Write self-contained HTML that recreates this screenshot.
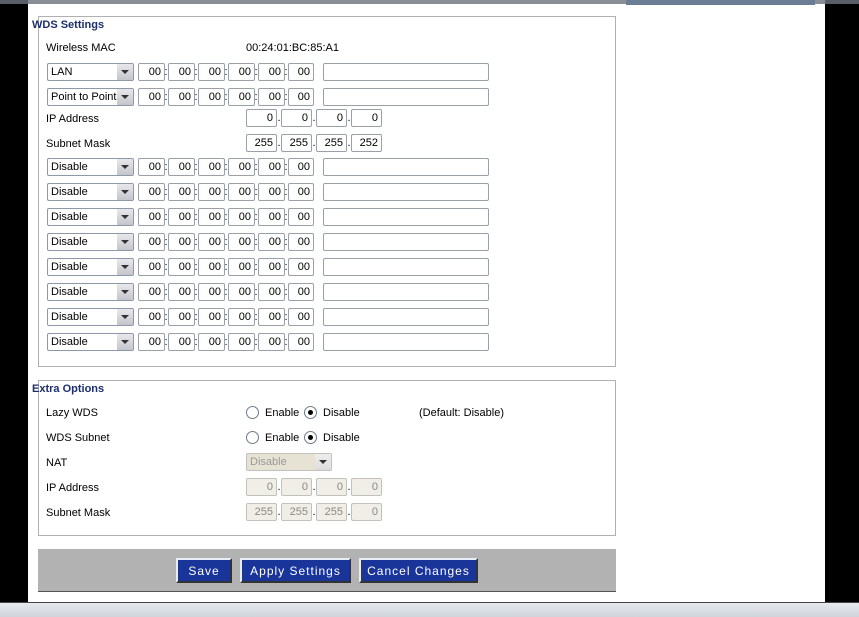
<!DOCTYPE html>
<html><head><meta charset="utf-8"><style>
*{margin:0;padding:0;box-sizing:border-box}
body{width:859px;height:617px;position:relative;background:#000;overflow:hidden;font-family:"Liberation Sans",sans-serif;font-size:11px;color:#000}
.a{position:absolute}
#pg{left:28px;top:0;width:797px;height:617px;background:#fff}
.fs{border:1px solid #b0b0b0}
.lg{font-weight:bold;color:#1c2f6b;font-size:11px}
.lb{font-size:11px;line-height:14px;margin-top:1px}
.in{height:18px;border:1px solid #9aa0a8;border-radius:2px;background:#fff;text-align:right;padding-right:3px;line-height:16px;font-size:11px}
.sel{width:87px;height:18px;border:1px solid #8d98a8;border-radius:2px;background:#fff;line-height:16px;padding-left:3px;font-size:11px;overflow:hidden;white-space:nowrap;padding-right:16px}
.sel b{position:absolute;right:0;top:0;width:16px;height:16px;background:linear-gradient(#e8e8ec,#c4c4cc)}
.sel b:after{content:"";position:absolute;left:4px;top:6px;border:4px solid transparent;border-top:4px solid #333;border-bottom:0}
.c{width:4px;text-align:center;line-height:18px}
.ti{width:166px;height:18px;border:1px solid #9aa0a8;border-radius:2px;background:#fff}
.dis{background:#f0eee6;color:#888;border-color:#c2c2bc}
.rd{width:13px;height:13px;border:1px solid #6f7a88;border-radius:50%;background:#fff}
.rd.on:after{content:"";position:absolute;left:3px;top:3px;width:5px;height:5px;border-radius:50%;background:#000}
.bt{height:25px;background:#1a3599;color:#fff;font-family:"Liberation Sans",sans-serif;letter-spacing:1px;font-size:12px;text-align:center;line-height:22px;border-top:2px solid #e8ecf6;border-left:2px solid #e8ecf6;border-right:2px solid #333;border-bottom:2px solid #333}
</style></head><body>
<div class="a" style="left:0;top:0;width:859px;height:4px;background:#5a5e66"></div>
<div class="a" id="pg"></div>
<div class="a" style="left:28px;top:0;width:797px;height:4px;background:#8a8e96"></div>
<div class="a" style="left:626px;top:0;width:189px;height:5px;background:#6b7d94"></div>

<div class="a fs" style="left:38px;top:16px;width:578px;height:351px"></div>
<div class="a lg" style="left:32px;top:19px">WDS Settings</div>
<div class="a lb" style="left:46px;top:40px">Wireless MAC</div>
<div class="a lb" style="left:246px;top:40px">00:24:01:BC:85:A1</div>

<div class="a sel" style="left:47px;top:63px">LAN<b></b></div>
<div class="a sel" style="left:47px;top:88px">Point to Point<b></b></div>
<div class="a sel" style="left:47px;top:158px">Disable<b></b></div>
<div class="a sel" style="left:47px;top:183px">Disable<b></b></div>
<div class="a sel" style="left:47px;top:208px">Disable<b></b></div>
<div class="a sel" style="left:47px;top:233px">Disable<b></b></div>
<div class="a sel" style="left:47px;top:258px">Disable<b></b></div>
<div class="a sel" style="left:47px;top:283px">Disable<b></b></div>
<div class="a sel" style="left:47px;top:308px">Disable<b></b></div>
<div class="a sel" style="left:47px;top:333px">Disable<b></b></div>

<div class="a lb" style="left:46px;top:111px">IP Address</div>
<div class="a lb" style="left:46px;top:136px">Subnet Mask</div>
<div class="a in" style="left:246px;top:109px;width:31px">0</div><div class="a c" style="left:277px;top:109px">.</div>
<div class="a in" style="left:281px;top:109px;width:31px">0</div><div class="a c" style="left:312px;top:109px">.</div>
<div class="a in" style="left:316px;top:109px;width:31px">0</div><div class="a c" style="left:347px;top:109px">.</div>
<div class="a in" style="left:351px;top:109px;width:31px">0</div>
<div class="a in" style="left:246px;top:134px;width:31px">255</div><div class="a c" style="left:277px;top:134px">.</div>
<div class="a in" style="left:281px;top:134px;width:31px">255</div><div class="a c" style="left:312px;top:134px">.</div>
<div class="a in" style="left:316px;top:134px;width:31px">255</div><div class="a c" style="left:347px;top:134px">.</div>
<div class="a in" style="left:351px;top:134px;width:31px">252</div>

<div class="a fs" style="left:38px;top:380px;width:578px;height:156px"></div>
<div class="a lg" style="left:32px;top:383px">Extra Options</div>
<div class="a lb" style="left:46px;top:405px">Lazy WDS</div>
<div class="a lb" style="left:46px;top:430px">WDS Subnet</div>
<div class="a lb" style="left:46px;top:455px">NAT</div>
<div class="a lb" style="left:46px;top:480px">IP Address</div>
<div class="a lb" style="left:46px;top:505px">Subnet Mask</div>
<div class="a rd" style="left:246px;top:406px"></div><div class="a lb" style="left:265px;top:405px">Enable</div>
<div class="a rd on" style="left:304px;top:406px"></div><div class="a lb" style="left:323px;top:405px">Disable</div>
<div class="a lb" style="left:419px;top:405px">(Default: Disable)</div>
<div class="a rd" style="left:246px;top:431px"></div><div class="a lb" style="left:265px;top:430px">Enable</div>
<div class="a rd on" style="left:304px;top:431px"></div><div class="a lb" style="left:323px;top:430px">Disable</div>
<div class="a sel dis" style="left:246px;top:453px;width:86px;background:#e6e3d4;color:#999">Disable<b style="background:linear-gradient(#eee,#ddd)"></b></div>
<div class="a in dis" style="left:246px;top:478px;width:31px">0</div><div class="a c" style="left:277px;top:478px">.</div>
<div class="a in dis" style="left:281px;top:478px;width:31px">0</div><div class="a c" style="left:312px;top:478px">.</div>
<div class="a in dis" style="left:316px;top:478px;width:31px">0</div><div class="a c" style="left:347px;top:478px">.</div>
<div class="a in dis" style="left:351px;top:478px;width:31px">0</div>
<div class="a in dis" style="left:246px;top:503px;width:31px">255</div><div class="a c" style="left:277px;top:503px">.</div>
<div class="a in dis" style="left:281px;top:503px;width:31px">255</div><div class="a c" style="left:312px;top:503px">.</div>
<div class="a in dis" style="left:316px;top:503px;width:31px">255</div><div class="a c" style="left:347px;top:503px">.</div>
<div class="a in dis" style="left:351px;top:503px;width:31px">0</div>

<div class="a" style="left:38px;top:549px;width:578px;height:43px;background:#b2b2b2;border-bottom:1px solid #555"></div>
<div class="a bt" style="left:176px;top:558px;width:56px">Save</div>
<div class="a bt" style="left:240px;top:558px;width:111px">Apply Settings</div>
<div class="a bt" style="left:359px;top:558px;width:119px">Cancel Changes</div>

<div class="a" style="left:0;top:602px;width:859px;height:15px;background:linear-gradient(#e6e9ee,#cfd3da);border-top:1px solid #444"></div>

<div class="a in" style="left:138px;top:63px;width:27px">00</div><div class="a c" style="left:164px;top:63px">:</div><div class="a in" style="left:168px;top:63px;width:27px">00</div><div class="a c" style="left:194px;top:63px">:</div><div class="a in" style="left:198px;top:63px;width:27px">00</div><div class="a c" style="left:224px;top:63px">:</div><div class="a in" style="left:228px;top:63px;width:27px">00</div><div class="a c" style="left:254px;top:63px">:</div><div class="a in" style="left:258px;top:63px;width:27px">00</div><div class="a c" style="left:284px;top:63px">:</div><div class="a in" style="left:288px;top:63px;width:26px">00</div><div class="a ti" style="left:323px;top:63px"></div>
<div class="a in" style="left:138px;top:88px;width:27px">00</div><div class="a c" style="left:164px;top:88px">:</div><div class="a in" style="left:168px;top:88px;width:27px">00</div><div class="a c" style="left:194px;top:88px">:</div><div class="a in" style="left:198px;top:88px;width:27px">00</div><div class="a c" style="left:224px;top:88px">:</div><div class="a in" style="left:228px;top:88px;width:27px">00</div><div class="a c" style="left:254px;top:88px">:</div><div class="a in" style="left:258px;top:88px;width:27px">00</div><div class="a c" style="left:284px;top:88px">:</div><div class="a in" style="left:288px;top:88px;width:26px">00</div><div class="a ti" style="left:323px;top:88px"></div>
<div class="a in" style="left:138px;top:158px;width:27px">00</div><div class="a c" style="left:164px;top:158px">:</div><div class="a in" style="left:168px;top:158px;width:27px">00</div><div class="a c" style="left:194px;top:158px">:</div><div class="a in" style="left:198px;top:158px;width:27px">00</div><div class="a c" style="left:224px;top:158px">:</div><div class="a in" style="left:228px;top:158px;width:27px">00</div><div class="a c" style="left:254px;top:158px">:</div><div class="a in" style="left:258px;top:158px;width:27px">00</div><div class="a c" style="left:284px;top:158px">:</div><div class="a in" style="left:288px;top:158px;width:26px">00</div><div class="a ti" style="left:323px;top:158px"></div>
<div class="a in" style="left:138px;top:183px;width:27px">00</div><div class="a c" style="left:164px;top:183px">:</div><div class="a in" style="left:168px;top:183px;width:27px">00</div><div class="a c" style="left:194px;top:183px">:</div><div class="a in" style="left:198px;top:183px;width:27px">00</div><div class="a c" style="left:224px;top:183px">:</div><div class="a in" style="left:228px;top:183px;width:27px">00</div><div class="a c" style="left:254px;top:183px">:</div><div class="a in" style="left:258px;top:183px;width:27px">00</div><div class="a c" style="left:284px;top:183px">:</div><div class="a in" style="left:288px;top:183px;width:26px">00</div><div class="a ti" style="left:323px;top:183px"></div>
<div class="a in" style="left:138px;top:208px;width:27px">00</div><div class="a c" style="left:164px;top:208px">:</div><div class="a in" style="left:168px;top:208px;width:27px">00</div><div class="a c" style="left:194px;top:208px">:</div><div class="a in" style="left:198px;top:208px;width:27px">00</div><div class="a c" style="left:224px;top:208px">:</div><div class="a in" style="left:228px;top:208px;width:27px">00</div><div class="a c" style="left:254px;top:208px">:</div><div class="a in" style="left:258px;top:208px;width:27px">00</div><div class="a c" style="left:284px;top:208px">:</div><div class="a in" style="left:288px;top:208px;width:26px">00</div><div class="a ti" style="left:323px;top:208px"></div>
<div class="a in" style="left:138px;top:233px;width:27px">00</div><div class="a c" style="left:164px;top:233px">:</div><div class="a in" style="left:168px;top:233px;width:27px">00</div><div class="a c" style="left:194px;top:233px">:</div><div class="a in" style="left:198px;top:233px;width:27px">00</div><div class="a c" style="left:224px;top:233px">:</div><div class="a in" style="left:228px;top:233px;width:27px">00</div><div class="a c" style="left:254px;top:233px">:</div><div class="a in" style="left:258px;top:233px;width:27px">00</div><div class="a c" style="left:284px;top:233px">:</div><div class="a in" style="left:288px;top:233px;width:26px">00</div><div class="a ti" style="left:323px;top:233px"></div>
<div class="a in" style="left:138px;top:258px;width:27px">00</div><div class="a c" style="left:164px;top:258px">:</div><div class="a in" style="left:168px;top:258px;width:27px">00</div><div class="a c" style="left:194px;top:258px">:</div><div class="a in" style="left:198px;top:258px;width:27px">00</div><div class="a c" style="left:224px;top:258px">:</div><div class="a in" style="left:228px;top:258px;width:27px">00</div><div class="a c" style="left:254px;top:258px">:</div><div class="a in" style="left:258px;top:258px;width:27px">00</div><div class="a c" style="left:284px;top:258px">:</div><div class="a in" style="left:288px;top:258px;width:26px">00</div><div class="a ti" style="left:323px;top:258px"></div>
<div class="a in" style="left:138px;top:283px;width:27px">00</div><div class="a c" style="left:164px;top:283px">:</div><div class="a in" style="left:168px;top:283px;width:27px">00</div><div class="a c" style="left:194px;top:283px">:</div><div class="a in" style="left:198px;top:283px;width:27px">00</div><div class="a c" style="left:224px;top:283px">:</div><div class="a in" style="left:228px;top:283px;width:27px">00</div><div class="a c" style="left:254px;top:283px">:</div><div class="a in" style="left:258px;top:283px;width:27px">00</div><div class="a c" style="left:284px;top:283px">:</div><div class="a in" style="left:288px;top:283px;width:26px">00</div><div class="a ti" style="left:323px;top:283px"></div>
<div class="a in" style="left:138px;top:308px;width:27px">00</div><div class="a c" style="left:164px;top:308px">:</div><div class="a in" style="left:168px;top:308px;width:27px">00</div><div class="a c" style="left:194px;top:308px">:</div><div class="a in" style="left:198px;top:308px;width:27px">00</div><div class="a c" style="left:224px;top:308px">:</div><div class="a in" style="left:228px;top:308px;width:27px">00</div><div class="a c" style="left:254px;top:308px">:</div><div class="a in" style="left:258px;top:308px;width:27px">00</div><div class="a c" style="left:284px;top:308px">:</div><div class="a in" style="left:288px;top:308px;width:26px">00</div><div class="a ti" style="left:323px;top:308px"></div>
<div class="a in" style="left:138px;top:333px;width:27px">00</div><div class="a c" style="left:164px;top:333px">:</div><div class="a in" style="left:168px;top:333px;width:27px">00</div><div class="a c" style="left:194px;top:333px">:</div><div class="a in" style="left:198px;top:333px;width:27px">00</div><div class="a c" style="left:224px;top:333px">:</div><div class="a in" style="left:228px;top:333px;width:27px">00</div><div class="a c" style="left:254px;top:333px">:</div><div class="a in" style="left:258px;top:333px;width:27px">00</div><div class="a c" style="left:284px;top:333px">:</div><div class="a in" style="left:288px;top:333px;width:26px">00</div><div class="a ti" style="left:323px;top:333px"></div>
</body></html>
